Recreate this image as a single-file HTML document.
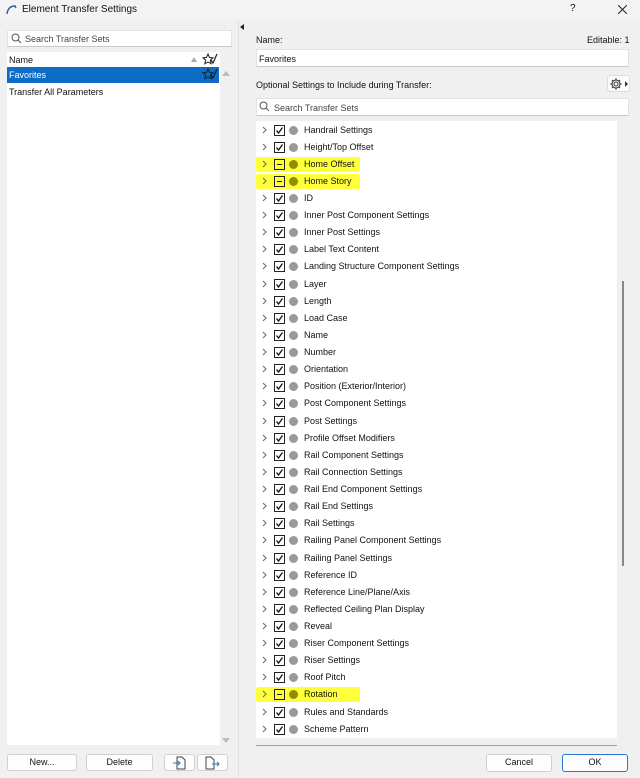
<!DOCTYPE html>
<html><head><meta charset="utf-8"><style>
*{box-sizing:border-box;margin:0;padding:0}
body{width:640px;height:778px;background:#f0f0f0;font-family:"Liberation Sans",sans-serif;font-size:9px;color:#111;position:relative;overflow:hidden}
.a{position:absolute}
.box{background:#fff}
.inp{background:#fff;border:1px solid #e3e3e3;border-bottom:1px solid #c8c8c8}
.btn{position:absolute;background:#fdfdfd;border:1px solid #d0d0d0;border-radius:3px;text-align:center;line-height:15px;font-size:9px}
.row{position:absolute;left:256px;width:361px;height:17.12px}
.row .ch{position:absolute;left:6px;top:4px}
.row .cb{position:absolute;left:18px;top:3px;width:11px;height:11px;border:1px solid #222;background:#fff}
.row .dot{position:absolute;left:33px;top:4px;width:9px;height:9px;border-radius:50%;background:#999}
.row .t{position:absolute;left:48px;top:3px;white-space:nowrap}
.row.hl .hlb{position:absolute;left:0;top:1px;width:104px;height:15px;background:#ffff3c;border-radius:2px}
.row.hl .dot{background:#8f8f00}
.row.hl .cb{background:transparent}
</style></head><body>
<div class="a" style="left:0;top:0;width:640px;height:20px;background:#f3f3f3"></div>
<svg class="a" style="left:6px;top:5px" width="11" height="10"><path d="M1 9 Q2 1 9 1 L10 3" stroke="#2a5bb5" stroke-width="1.4" fill="none"/></svg>
<div class="a" style="left:22px;top:4px;font-size:10px">Element Transfer Settings</div>
<div class="a" style="left:570px;top:3px;font-size:10px">?</div>
<svg class="a" style="left:618px;top:5px" width="9" height="9"><path d="M0 0L9 9M9 0L0 9" stroke="#222" stroke-width="1"/></svg>

<div class="a inp" style="left:7px;top:30px;width:225px;height:17px"></div>
<svg class="a" style="left:11px;top:33px" width="11" height="11"><circle cx="4.5" cy="4.5" r="3.5" stroke="#555" fill="none"/><path d="M7 7L10 10" stroke="#555"/></svg>
<div class="a" style="left:25px;top:34px;color:#444">Search Transfer Sets</div>
<div class="a box" style="left:7px;top:52px;width:213px;height:693px"></div>
<div class="a" style="left:9px;top:55px">Name</div>
<div class="a" style="left:191px;top:57px;width:0;height:0;border-left:3px solid transparent;border-right:3px solid transparent;border-bottom:5px solid #aaa"></div>
<svg class="a" style="left:202px;top:53px" width="16" height="13"><path d="M6 1l1.5 3.5 3.5.3-2.7 2.4.9 3.6L6 9 2.8 10.8l.9-3.6L1 4.8l3.5-.3z" stroke="#222" fill="none"/><path d="M9 7l2 3 4-9" stroke="#222" fill="none" stroke-width="1.2"/></svg>
<div class="a" style="left:7px;top:67px;width:212px;height:16px;background:#0f6cc4"></div>
<div class="a" style="left:9px;top:70px;color:#fff">Favorites</div>
<svg class="a" style="left:202px;top:68px" width="16" height="13"><path d="M6 1l1.5 3.5 3.5.3-2.7 2.4.9 3.6L6 9 2.8 10.8l.9-3.6L1 4.8l3.5-.3z" stroke="#123" fill="none"/><path d="M9 7l2 3 4-9" stroke="#123" fill="none" stroke-width="1.2"/></svg>
<div class="a" style="left:222px;top:71px;border-left:4px solid transparent;border-right:4px solid transparent;border-bottom:5px solid #bbb"></div>
<div class="a" style="left:9px;top:87px">Transfer All Parameters</div>
<div class="a" style="left:222px;top:738px;border-left:4px solid transparent;border-right:4px solid transparent;border-top:5px solid #bbb"></div>
<div class="btn" style="left:7px;top:754px;width:70px;height:17px">New...</div>
<div class="btn" style="left:86px;top:754px;width:67px;height:17px">Delete</div>
<div class="btn" style="left:164px;top:754px;width:31px;height:17px"></div>
<div class="btn" style="left:197px;top:754px;width:31px;height:17px"></div>
<svg class="a" style="left:173px;top:756px" width="14" height="14"><path d="M4 1h5l3 3v9H4z" stroke="#444" fill="none"/><path d="M0 7h7M5 5l2 2-2 2" stroke="#2a78d0" fill="none"/></svg>
<svg class="a" style="left:205px;top:756px" width="16" height="14"><path d="M1 1h5l3 3v9H1z" stroke="#444" fill="none"/><path d="M7 8h7M12 6l2 2-2 2" stroke="#2a78d0" fill="none"/></svg>

<div class="a" style="left:238px;top:20px;width:1px;height:758px;background:#e2e2e2"></div>
<div class="a" style="left:240px;top:24px;border-top:3px solid transparent;border-bottom:3px solid transparent;border-right:4px solid #222"></div>

<div class="a" style="left:256px;top:35px">Name:</div>
<div class="a" style="left:587px;top:35px">Editable: 1</div>
<div class="a inp" style="left:256px;top:49px;width:373px;height:18px"></div>
<div class="a" style="left:259px;top:54px">Favorites</div>
<div class="a" style="left:256px;top:80px">Optional Settings to Include during Transfer:</div>
<div class="a" style="left:607px;top:75px;width:23px;height:17px;background:#fbfbfb;border:1px solid #ddd;border-radius:3px"></div>
<svg class="a" style="left:609px;top:77px" width="14" height="14"><circle cx="7" cy="7" r="2" stroke="#333" fill="none"/><path d="M7 1.5v2M7 10.5v2M1.5 7h2M10.5 7h2M3.1 3.1l1.4 1.4M9.5 9.5l1.4 1.4M3.1 10.9l1.4-1.4M9.5 4.5l1.4-1.4" stroke="#333" stroke-width="1.3"/><circle cx="7" cy="7" r="4" stroke="#333" fill="none"/></svg>
<div class="a" style="left:625px;top:81px;border-top:3px solid transparent;border-bottom:3px solid transparent;border-left:3px solid #333"></div>
<div class="a inp" style="left:256px;top:98px;width:373px;height:18px"></div>
<svg class="a" style="left:259px;top:101px" width="11" height="11"><circle cx="4.5" cy="4.5" r="3.5" stroke="#555" fill="none"/><path d="M7 7L10 10" stroke="#555"/></svg>
<div class="a" style="left:274px;top:103px;color:#444">Search Transfer Sets</div>
<div class="a box" style="left:256px;top:121px;width:361px;height:617px"></div>
<div class="a" style="left:622px;top:281px;width:2px;height:285px;background:#888"></div>
<div class="a" style="left:256px;top:745px;width:361px;height:1px;background:#a0a0a0"></div>
<div class="btn" style="left:486px;top:754px;width:66px;height:18px">Cancel</div>
<div class="btn" style="left:562px;top:754px;width:66px;height:18px;border:1px solid #2a78d0">OK</div>

<div id="rows"></div>
<script>
var names=["Handrail Settings","Height/Top Offset","Home Offset","Home Story","ID","Inner Post Component Settings","Inner Post Settings","Label Text Content","Landing Structure Component Settings","Layer","Length","Load Case","Name","Number","Orientation","Position (Exterior/Interior)","Post Component Settings","Post Settings","Profile Offset Modifiers","Rail Component Settings","Rail Connection Settings","Rail End Component Settings","Rail End Settings","Rail Settings","Railing Panel Component Settings","Railing Panel Settings","Reference ID","Reference Line/Plane/Axis","Reflected Ceiling Plan Display","Reveal","Riser Component Settings","Riser Settings","Roof Pitch","Rotation","Rules and Standards","Scheme Pattern"];
var hl={"Home Offset":1,"Home Story":1,"Rotation":1};var h="";
names.forEach(function(n,i){var y=121.5+i*17.12;var H=hl[n];
h+='<div class="row'+(H?' hl':'')+'" style="top:'+y+'px">'+(H?'<div class="hlb"></div>':'')+
'<svg class="ch" width="5" height="8"><path d="M1 1l3 3-3 3" stroke="#666" fill="none"/></svg>'+
'<div class="cb">'+(H?'<svg width="9" height="9" style="position:absolute;left:0;top:0"><path d="M2 4.5h5" stroke="#222"/></svg>':'<svg width="9" height="9" style="position:absolute;left:0;top:0"><path d="M1.5 4.5l2 2.5 4-5.5" stroke="#111" stroke-width="1.3" fill="none"/></svg>')+'</div>'+
'<div class="dot"></div><div class="t">'+n+'</div></div>';});
document.getElementById("rows").innerHTML=h;
</script>
</body></html>
